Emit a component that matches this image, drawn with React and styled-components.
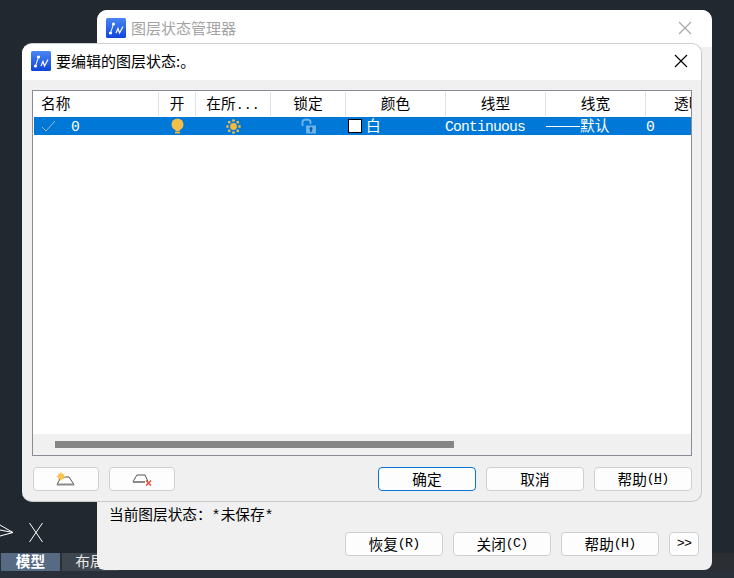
import React from "react";
import styled, { createGlobalStyle } from "styled-components";

const cjk = `"Noto Sans CJK SC", "Liberation Sans", sans-serif`;
const mono = `"Liberation Mono", "Noto Sans CJK SC", monospace`;

const GlobalStyle = createGlobalStyle`
  html, body { margin: 0; padding: 0; background: #212830; }
  * { box-sizing: border-box; }
`;

const Desktop = styled.div`
  position: relative;
  width: 734px;
  height: 578px;
  overflow: hidden;
  background: #212830;
  display: flex;
  flex-direction: column;
  justify-content: flex-end;
  font-family: ${cjk};
  color: #000;
`;

const ModelBar = styled.div`
  display: flex;
  align-items: stretch;
  gap: 2px;
  height: 25px;
  padding: 0 0 7px 1px;
  background: linear-gradient(#2b2e32 0 18px, #2a303a 18px);
`;

const ModelTab = styled.div`
  width: ${p => (p.$active ? "59px" : "56px")};
  background: ${p => (p.$active ? "#566a84" : "#3e4650")};
  color: ${p => (p.$active ? "#fff" : "#e8e8e8")};
  font-size: 14.67px;
  font-weight: ${p => (p.$active ? 700 : 400)};
  line-height: 16px;
  text-align: center;
`;

const Axis = styled.div`
  position: absolute;
  left: 0;
  top: 520px;
`;

const BackWindow = styled.div`
  position: absolute;
  left: 97px;
  top: 10px;
  width: 615px;
  height: 560px;
  border-radius: 10px 10px 8px 8px;
  background: #f0f0f0;
  display: flex;
  flex-direction: column;
  overflow: hidden;
`;

const FrontWindow = styled.div`
  position: absolute;
  left: 22px;
  top: 43px;
  width: 680px;
  height: 459px;
  border: 1px solid #c9c9c9;
  border-top-color: #cfcfcf;
  border-left: 0;
  border-radius: 10px;
  background: #f0f0f0;
  display: flex;
  flex-direction: column;
  overflow: hidden;
`;

const TitleBar = styled.div`
  display: flex;
  align-items: center;
  flex: none;
  height: ${p => p.$height}px;
  padding: ${p => p.$pad};
  background: #fff;
  gap: 5px;
  font-size: 15px;
  color: ${p => (p.$muted ? "#a3a3a3" : "#000")};
`;

const TitleText = styled.span`
  flex: 1;
  line-height: 20px;
`;

const Spacer = styled.div`
  flex: 1;
`;

const StatusLine = styled.div`
  padding-left: 12px;
  font-size: 14.67px;
  line-height: 20px;
  height: 20px;
`;

const FooterRow = styled.div`
  display: flex;
  justify-content: flex-end;
  gap: 10px;
  padding: 8px 13px 14px 0;
`;

const Button = styled.button`
  width: ${p => p.$width || 98}px;
  height: 24px;
  padding: 0;
  border: 1px solid ${p => (p.$primary ? "#0a74cf" : "#cfcfcf")};
  border-radius: 4px;
  background: #fdfdfd;
  color: #000;
  font-family: ${cjk};
  font-size: 14.67px;
  line-height: 22px;
  display: flex;
  align-items: center;
  justify-content: center;
`;

const Key = styled.span`
  font-family: ${mono};
  font-size: 13.33px;
  letter-spacing: -0.8px;
`;

const Mnemonic = styled.span`
  text-decoration: underline;
`;

const Star = styled.span`
  font-family: ${mono};
  font-size: 15px;
`;

const Body = styled.div`
  flex: 1;
  display: flex;
  flex-direction: column;
  padding: 10px 9px 10px 10px;
`;

const Table = styled.div`
  height: 366px;
  border: 1px solid #8b8b98;
  background: #fff;
  display: flex;
  flex-direction: column;
  overflow: hidden;
`;

const HeaderRow = styled.div`
  display: grid;
  grid-template-columns: 126px 37px 75px 75px 100px 100px 100px 46px;
  height: 26px;
  padding-top: 1px;
  flex: none;
`;

const HeaderCell = styled.div`
  height: 24px;
  border-right: ${p => (p.$last ? "0" : "1px solid #e2e2e2")};
  font-size: 14.67px;
  line-height: 22px;
  white-space: nowrap;
  overflow: hidden;
  text-align: ${p => p.$align || "center"};
  padding-left: ${p => p.$indent || 0}px;
`;

const Dots = styled.span`
  font-family: ${mono};
  font-size: 13.33px;
`;

const DataRow = styled.div`
  display: grid;
  grid-template-columns: 125px 37px 75px 75px 100px 100px 100px 46px;
  height: 18px;
  margin-left: 1px;
  flex: none;
  background: #0078d7;
  color: #fff;
`;

const DataCell = styled.div`
  display: flex;
  align-items: center;
  justify-content: ${p => p.$justify || "flex-start"};
  padding-left: ${p => p.$indent || 0}px;
  font-size: 14.67px;
  line-height: 16px;
  white-space: nowrap;
`;

const Mono = styled.span`
  font-family: ${mono};
  font-size: 14.67px;
  letter-spacing: -0.8px;
  padding-top: 1px;
  margin-left: ${p => p.$gap || 0}px;
`;

const CellText = styled.span`
  position: relative;
  top: -1px;
`;

const Swatch = styled.span`
  width: 14px;
  height: 14px;
  background: #fff;
  border: 1px solid #000;
  margin-right: 4px;
  flex: none;
`;

const Dash = styled.span`
  width: 34px;
  height: 1px;
  background: #fff;
  flex: none;
`;

const TableFill = styled.div`
  flex: 1;
`;

const ScrollTrack = styled.div`
  flex: none;
  height: 21px;
  background: #f0f0f0;
  padding: 7px 0 0 22px;
`;

const ScrollThumb = styled.div`
  width: 399px;
  height: 7px;
  background: #868686;
`;

const ActionRow = styled.div`
  display: flex;
  gap: 10px;
  padding: 11px 0 0 1px;
`;

const IconButtons = styled.div`
  display: flex;
  gap: 10px;
  flex: 1;
`;

const Logo = ({ id }) => (
  <svg width="20" height="20" viewBox="0 0 20 20">
    <defs>
      <linearGradient id={id} x1="0" y1="0" x2="0" y2="1">
        <stop offset="0" stopColor="#4a86f2" />
        <stop offset="1" stopColor="#0f45dc" />
      </linearGradient>
    </defs>
    <rect width="20" height="20" rx="1.5" fill={`url(#${id})`} />
    <path d="M4.5 15 L7.5 6" stroke="#fff" strokeWidth="1" fill="none" />
    <path d="M10 15 L12 10.5 L13.5 15 L17 8.5" stroke="#fff" strokeWidth="1.2" fill="none" />
    <circle cx="7.5" cy="6" r="1.6" fill="#fff" />
    <circle cx="4.5" cy="15" r="1.6" fill="#fff" />
  </svg>
);

const CloseIcon = ({ color }) => (
  <svg width="14" height="14" viewBox="0 0 14 14">
    <path d="M1 1 L13 13 M13 1 L1 13" stroke={color} strokeWidth="1.2" fill="none" />
  </svg>
);

const CheckIcon = () => (
  <svg width="14" height="12" viewBox="0 0 14 12">
    <path d="M1 7 L5 11 L14 1" stroke="#9fb4c8" strokeWidth="1" fill="none" />
  </svg>
);

const BulbIcon = () => (
  <svg width="13" height="16" viewBox="0 0 13 16">
    <circle cx="6.5" cy="6.5" r="6" fill="#f4be4a" />
    <rect x="4.5" y="12" width="4" height="1.5" fill="#f4be4a" />
    <rect x="4" y="14" width="5" height="1.5" fill="#f4a930" />
  </svg>
);

const SunIcon = () => (
  <svg width="15" height="15" viewBox="0 0 15 15">
    <circle cx="7.5" cy="7.5" r="3.4" fill="#f4b93e" />
    <g fill="#f4b93e">
      <rect x="6.2" y="0.4" width="2.6" height="2.2" />
      <rect x="6.2" y="12.4" width="2.6" height="2.2" />
      <rect x="0.4" y="6.2" width="2.2" height="2.6" />
      <rect x="12.4" y="6.2" width="2.2" height="2.6" />
      <rect x="2" y="2" width="2.4" height="2.4" />
      <rect x="10.6" y="2" width="2.4" height="2.4" />
      <rect x="2" y="10.6" width="2.4" height="2.4" />
      <rect x="10.6" y="10.6" width="2.4" height="2.4" />
    </g>
  </svg>
);

const LockIcon = () => (
  <svg width="15" height="16" viewBox="0 0 15 16">
    <path d="M1.5 8 V4 C1.5 0.5 9.5 0.5 9.5 4 V6" stroke="#6cb2e8" strokeWidth="2" fill="none" />
    <rect x="5" y="7.5" width="10" height="8" fill="#6cb2e8" />
    <circle cx="10" cy="10.5" r="1.5" fill="#0a5ea8" />
    <rect x="9.2" y="11" width="1.6" height="3" fill="#0a5ea8" />
  </svg>
);

const NewLayerIcon = () => (
  <svg width="20" height="14" viewBox="0 0 20 14">
    <path d="M1 12.5 L5 5 H13 L18 12.5 Z" fill="#fff" stroke="#555" strokeWidth="1" />
    <rect x="1" y="11.5" width="17" height="2" fill="#8a8a8a" />
    <circle cx="5" cy="4.5" r="3" fill="#f7b733" />
    <path d="M5 0 V9 M0.5 4.5 H9.5 M2 1.5 L8 7.5 M8 1.5 L2 7.5" stroke="#f7c85a" strokeWidth="1" />
  </svg>
);

const DeleteLayerIcon = () => (
  <svg width="20" height="14" viewBox="0 0 20 14">
    <path d="M1 9.5 L5 3 H13 L16 9.5" fill="#fff" stroke="#555" strokeWidth="1" />
    <rect x="1" y="9" width="12" height="2" fill="#8a8a8a" />
    <path d="M14 8.5 L19 13.5 M19 8.5 L14 13.5" stroke="#e0553f" strokeWidth="1.6" />
  </svg>
);

const AxisMark = () => (
  <svg width="46" height="26" viewBox="0 0 46 26" style={{ display: "block" }}>
    <path d="M0 5 L13 12.5 L0 16 M0 10 L13 12.5" stroke="#fff" strokeWidth="1" fill="none" />
    <path d="M29.5 3 L42.5 22 M42.5 3 L29.5 22" stroke="#fff" strokeWidth="1" fill="none" />
  </svg>
);

const App = () => (
  <Desktop>
    <GlobalStyle />
    <Axis>
      <AxisMark />
    </Axis>
    <ModelBar>
      <ModelTab $active>模型</ModelTab>
      <ModelTab>布局</ModelTab>
    </ModelBar>

    <BackWindow>
      <TitleBar $height={37} $pad="0 20px 1px 9px" $muted>
        <Logo id="logoBack" />
        <TitleText>图层状态管理器</TitleText>
        <CloseIcon color="#a8a8a8" />
      </TitleBar>
      <Spacer />
      <StatusLine>当前图层状态：<Star>*</Star>未保存<Star>*</Star></StatusLine>
      <FooterRow>
        <Button>恢复<Key>(R)</Key></Button>
        <Button>关闭<Key>(C)</Key></Button>
        <Button>帮助<Key>(H)</Key></Button>
        <Button $width={30}><Key>&gt;&gt;</Key></Button>
      </FooterRow>
    </BackWindow>

    <FrontWindow>
      <TitleBar $height={36} $pad="0 13px 2px 9px">
        <Logo id="logoFront" />
        <TitleText>要编辑的图层状态:。</TitleText>
        <CloseIcon color="#000" />
      </TitleBar>
      <Body>
        <Table>
          <HeaderRow>
            <HeaderCell $align="left" $indent={8}>名称</HeaderCell>
            <HeaderCell>开</HeaderCell>
            <HeaderCell>在所<Dots>...</Dots></HeaderCell>
            <HeaderCell>锁定</HeaderCell>
            <HeaderCell>颜色</HeaderCell>
            <HeaderCell>线型</HeaderCell>
            <HeaderCell>线宽</HeaderCell>
            <HeaderCell $align="left" $indent={28} $last>透明</HeaderCell>
          </HeaderRow>
          <DataRow>
            <DataCell $indent={7}>
              <CheckIcon />
              <Mono $gap={16}>0</Mono>
            </DataCell>
            <DataCell $justify="center"><BulbIcon /></DataCell>
            <DataCell $justify="center"><SunIcon /></DataCell>
            <DataCell $justify="center"><LockIcon /></DataCell>
            <DataCell $indent={2}><Swatch /><CellText>白</CellText></DataCell>
            <DataCell><Mono $gap={-1}>Continuous</Mono></DataCell>
            <DataCell><Dash /><CellText>默认</CellText></DataCell>
            <DataCell><Mono>0</Mono></DataCell>
          </DataRow>
          <TableFill />
          <ScrollTrack>
            <ScrollThumb />
          </ScrollTrack>
        </Table>
        <ActionRow>
          <IconButtons>
            <Button $width={66}><NewLayerIcon /></Button>
            <Button $width={66}><DeleteLayerIcon /></Button>
          </IconButtons>
          <Button $primary>确定</Button>
          <Button>取消</Button>
          <Button>帮助<Key>(<Mnemonic>H</Mnemonic>)</Key></Button>
        </ActionRow>
      </Body>
    </FrontWindow>
  </Desktop>
);

export default App;
